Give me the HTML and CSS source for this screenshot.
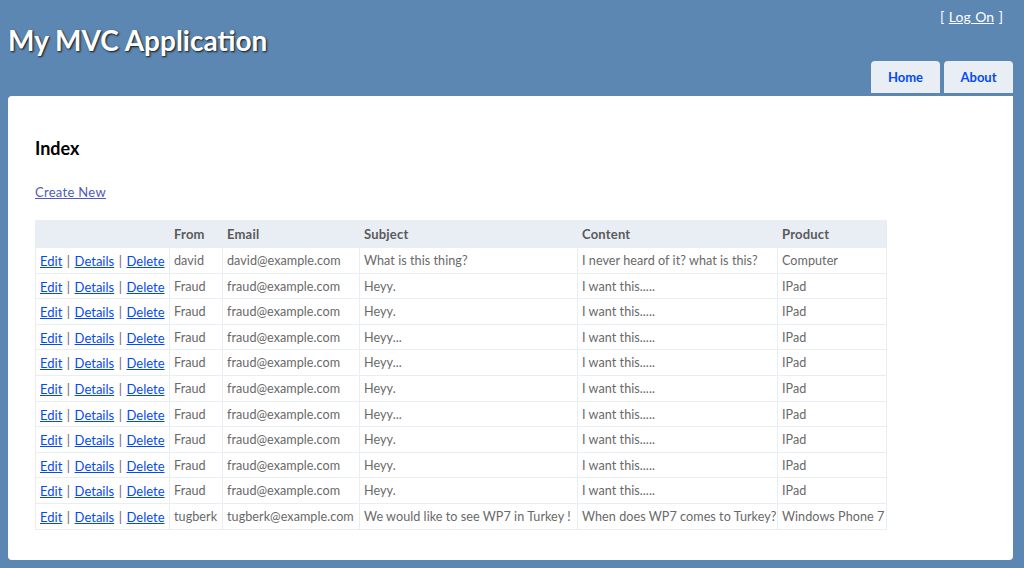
FILE: index.html
```html
<!DOCTYPE html>
<html>
<head>
<meta charset="utf-8">
<title>Index</title>
<link rel="stylesheet" href="styles.css">
</head>
<body>
<div class="page">
  <header class="header">
    <div class="title"><h1>My MVC Application</h1></div>
    <div class="nav-side">
      <div class="login">[ <a href="#">Log On</a> ]</div>
      <ul class="menu">
        <li><a href="#">Home</a></li>
        <li><a href="#">About</a></li>
      </ul>
    </div>
  </header>
  <main class="main">
    <h2 class="heading">Index</h2>
    <p class="create"><a href="#">Create New</a></p>
    <table class="grid">
      <colgroup>
        <col class="c1"><col class="c2"><col class="c3"><col class="c4"><col class="c5"><col class="c6">
      </colgroup>
      <thead>
        <tr><th></th><th>From</th><th>Email</th><th>Subject</th><th>Content</th><th>Product</th></tr>
      </thead>
      <tbody>
        <tr><td class="actions"><a href="#">Edit</a> | <a href="#">Details</a> | <a href="#">Delete</a></td><td>david</td><td>david@example.com</td><td>What is this thing?</td><td>I never heard of it? what is this?</td><td>Computer</td></tr>
        <tr><td class="actions"><a href="#">Edit</a> | <a href="#">Details</a> | <a href="#">Delete</a></td><td>Fraud</td><td>fraud@example.com</td><td>Heyy.</td><td>I want this.....</td><td>IPad</td></tr>
        <tr><td class="actions"><a href="#">Edit</a> | <a href="#">Details</a> | <a href="#">Delete</a></td><td>Fraud</td><td>fraud@example.com</td><td>Heyy.</td><td>I want this.....</td><td>IPad</td></tr>
        <tr><td class="actions"><a href="#">Edit</a> | <a href="#">Details</a> | <a href="#">Delete</a></td><td>Fraud</td><td>fraud@example.com</td><td>Heyy...</td><td>I want this.....</td><td>IPad</td></tr>
        <tr><td class="actions"><a href="#">Edit</a> | <a href="#">Details</a> | <a href="#">Delete</a></td><td>Fraud</td><td>fraud@example.com</td><td>Heyy...</td><td>I want this.....</td><td>IPad</td></tr>
        <tr><td class="actions"><a href="#">Edit</a> | <a href="#">Details</a> | <a href="#">Delete</a></td><td>Fraud</td><td>fraud@example.com</td><td>Heyy.</td><td>I want this.....</td><td>IPad</td></tr>
        <tr><td class="actions"><a href="#">Edit</a> | <a href="#">Details</a> | <a href="#">Delete</a></td><td>Fraud</td><td>fraud@example.com</td><td>Heyy...</td><td>I want this.....</td><td>IPad</td></tr>
        <tr><td class="actions"><a href="#">Edit</a> | <a href="#">Details</a> | <a href="#">Delete</a></td><td>Fraud</td><td>fraud@example.com</td><td>Heyy.</td><td>I want this.....</td><td>IPad</td></tr>
        <tr><td class="actions"><a href="#">Edit</a> | <a href="#">Details</a> | <a href="#">Delete</a></td><td>Fraud</td><td>fraud@example.com</td><td>Heyy.</td><td>I want this.....</td><td>IPad</td></tr>
        <tr><td class="actions"><a href="#">Edit</a> | <a href="#">Details</a> | <a href="#">Delete</a></td><td>Fraud</td><td>fraud@example.com</td><td>Heyy.</td><td>I want this.....</td><td>IPad</td></tr>
        <tr><td class="actions"><a href="#">Edit</a> | <a href="#">Details</a> | <a href="#">Delete</a></td><td>tugberk</td><td>tugberk@example.com</td><td>We would like to see WP7 in Turkey !</td><td>When does WP7 comes to Turkey?</td><td>Windows Phone 7</td></tr>
      </tbody>
    </table>
  </main>
</div>
</body>
</html>
```

FILE: styles.css
```css
html, body {
  margin: 0;
  padding: 0;
}
body {
  background-color: #5c87b2;
  font-family: "Lato", "Liberation Sans", sans-serif;
  font-size: 13px;
  color: #696969;
  height: 568px;
  overflow: hidden;
}
.page {
  display: flex;
  flex-direction: column;
}
.header {
  display: flex;
  justify-content: space-between;
  height: 96px;
  padding: 0 11px 0 8px;
}
.title h1 {
  margin: 0;
  padding-top: 24px;
  font-size: 28px;
  line-height: 32px;
  font-weight: bold;
  color: #fff;
  text-shadow: 1px 1px 2px #111;
}
.nav-side {
  display: flex;
  flex-direction: column;
  align-items: flex-end;
}
.login {
  margin-top: 8px;
  margin-right: 10px;
  font-size: 14px;
  line-height: 18px;
  color: #fff;
  word-spacing: 1px;
}
.login a {
  color: #fff;
  text-decoration: underline;
}
.menu {
  margin: auto 0 3px 0;
  padding: 0;
  list-style: none;
  display: flex;
  gap: 4px;
}
.menu li a {
  display: block;
  width: 69px;
  height: 32px;
  line-height: 32px;
  text-align: center;
  box-sizing: border-box;
  font-weight: bold;
  font-size: 13px;
  text-decoration: none;
  background-color: #e8eef4;
  color: #034af3;
  border-radius: 4px 4px 0 0;
}
.main {
  margin: 0 11px 0 8px;
  height: 464px;
  box-sizing: border-box;
  padding: 40px 27px 30px 27px;
  background-color: #fff;
  border-radius: 4px 0 4px 4px;
}
.heading {
  margin: 0;
  font-size: 18px;
  line-height: 24px;
  font-weight: bold;
  color: #000;
}
.create {
  margin: 24px 0 20px 0;
  line-height: 16px;
  letter-spacing: 0.3px;
}
.create a {
  color: #505abc;
  text-decoration: underline;
}
.grid {
  border-collapse: collapse;
  border: 1px solid #e8eef4;
  table-layout: fixed;
  width: 851px;
}
.grid col.c1 { width: 134px; }
.grid col.c2 { width: 53px; }
.grid col.c3 { width: 137px; }
.grid col.c4 { width: 218px; }
.grid col.c5 { width: 200px; }
.grid col.c6 { width: 109px; }
.grid th {
  padding: 6px 4px;
  line-height: 14px;
  text-align: left;
  background-color: #e8eef4;
  border: 1px solid #e8eef4;
  font-weight: bold;
  color: #5a5a5a;
  letter-spacing: 0.2px;
}
.grid td {
  padding: 6px 4px 4px 4px;
  font-size: 12.6px;
  line-height: 14.6px;
  border: 1px solid #e8eef4;
  white-space: nowrap;
  overflow: hidden;
  letter-spacing: 0.05px;
}
.grid td.actions {
  font-size: 13px;
  word-spacing: 1.2px;
  letter-spacing: 0;
}
.grid td a {
  color: #034af3;
  text-decoration: underline;
}
```
